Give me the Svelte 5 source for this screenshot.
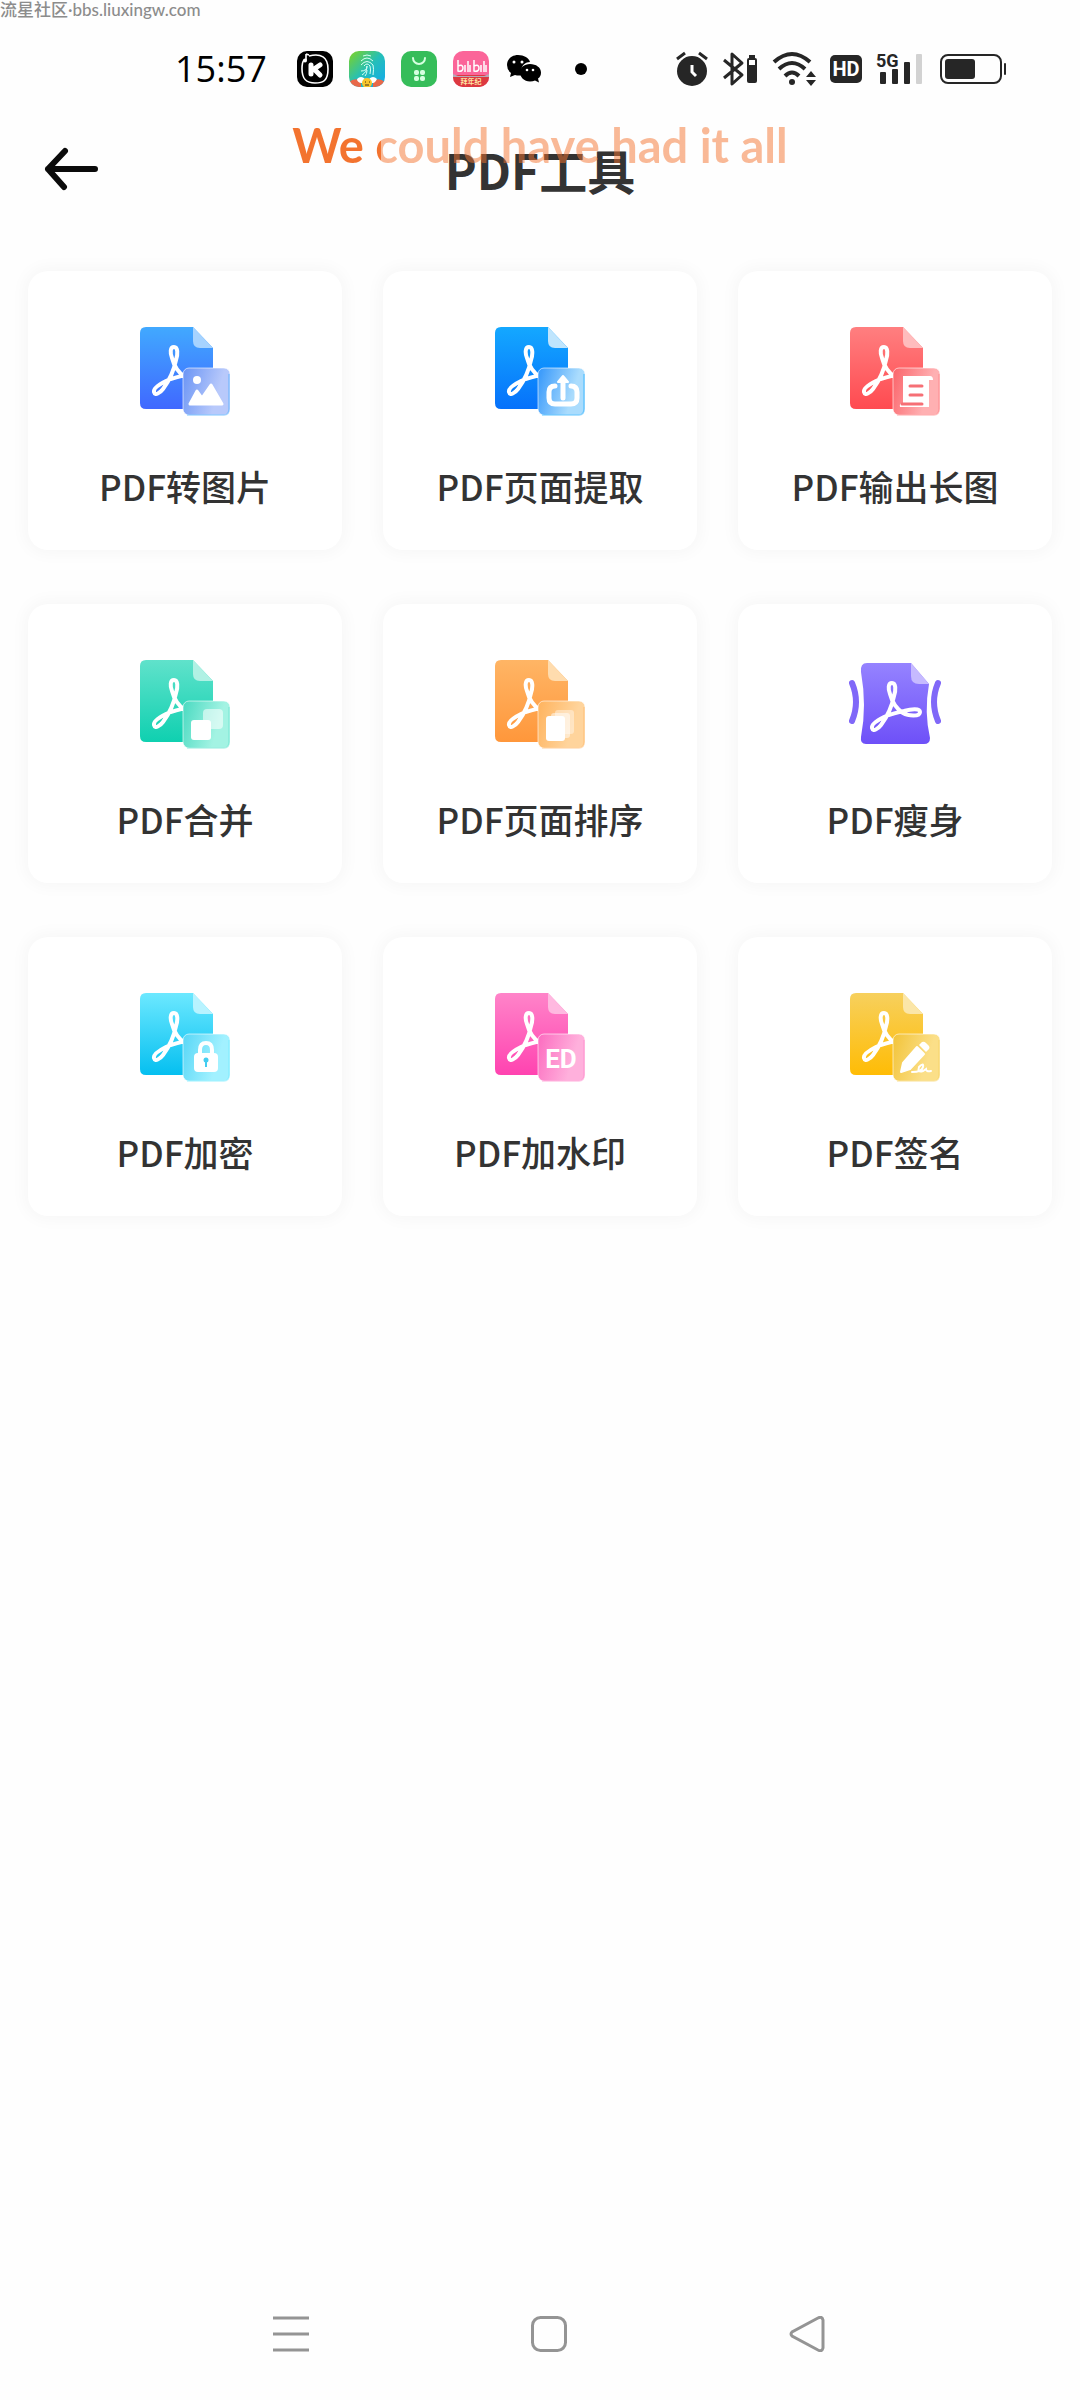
<script>
  const tools = [
    { id: "image", label: "PDF转图片", top: "#41a9ff", bottom: "#4068ff", fold: "#a6d3ff", glassA: "#7199f5", glassB: "#b8c9fb" },
    { id: "extract", label: "PDF页面提取", top: "#14a8ff", bottom: "#0671fb", fold: "#bfe5fd", glassA: "#3f9dfb", glassB: "#aadcfd" },
    { id: "long", label: "PDF输出长图", top: "#ff7f80", bottom: "#ff4a50", fold: "#ffbcbd", glassA: "#fb6a70", glassB: "#ffb0b2" },
    { id: "merge", label: "PDF合并", top: "#60e2cb", bottom: "#0fd0b0", fold: "#b0f1e4", glassA: "#52dcc4", glassB: "#a3f3e3" },
    { id: "sort", label: "PDF页面排序", top: "#ffb565", bottom: "#ff973b", fold: "#ffdcae", glassA: "#ffb663", glassB: "#ffd49c" },
    { id: "slim", label: "PDF瘦身", top: "#9583ff", bottom: "#6e50f8", fold: "#c6baff", glassA: "", glassB: "" },
    { id: "lock", label: "PDF加密", top: "#6ce8ff", bottom: "#05bff0", fold: "#b8f3ff", glassA: "#5fd9f7", glassB: "#a2f1ff" },
    { id: "mark", label: "PDF加水印", top: "#ff84c9", bottom: "#ff43b0", fold: "#ffb9e0", glassA: "#fc72c2", glassB: "#ffb0dc" },
    { id: "sign", label: "PDF签名", top: "#f7d05d", bottom: "#ffbc05", fold: "#fbe6a8", glassA: "#f3c640", glassB: "#fbdf88" }
  ];
</script>

{#snippet acrobat()}
  <path
    d="M34 20C30 20 30 26 32 31C34 39 39 46 45 50C50 53 62 54 62 49C62 45 53 46 46 48C38 50 32 51 26 54C20 57 13 61 14 65C15 69 20 66 23 62C29 54 34 43 36 33C38 27 38 20 34 20Z"
    fill="none"
    stroke="#fff"
    stroke-width="4"
    stroke-linejoin="round"
  />
{/snippet}

<div class="screen">
  <div class="watermark">流星社区·bbs.liuxingw.com</div>

  <header class="status">
    <time>15:57</time>
    <div class="apps">
      <svg width="36" height="36" viewBox="0 0 36 36">
        <rect width="36" height="36" rx="10" />
        <path d="M12 5c12-3 19 1 19 13s-5 14-13 14S5 29 5 18c0-4 0-7 2-9" fill="none" stroke="#fff" stroke-width="1.6" />
        <path d="M9 3v6M9 3l3 1" stroke="#fff" stroke-width="1.6" />
        <circle cx="8" cy="9.500" r="2" fill="#fff" />
        <path d="M14 14v9M17 18l6-4M17 18l6 6" stroke="#fff" stroke-width="5" stroke-linecap="round" />
      </svg>
      <svg width="36" height="36" viewBox="0 0 36 36">
        <defs>
          <linearGradient id="finger" x1="0" y1="0" x2="1" y2="1">
            <stop stop-color="#7fd321" /><stop offset=".5" stop-color="#25bfb9" /><stop offset="1" stop-color="#12a8ee" />
          </linearGradient>
          <clipPath id="app-mask"><rect width="36" height="36" rx="10" /></clipPath>
        </defs>
        <g clip-path="url(#app-mask)">
          <rect width="36" height="36" fill="url(#finger)" />
          <path d="M14 5q4-2 8 0M12 10q6-6 12 0M12 14q6-7 12 0 1 4 0 10M15 15q3-4 6 0 1 4 0 8M12 20q6 0 6-5 0 6-5 9M18 19q0 4-2 6" fill="none" stroke="#d8fff4" />
          <path d="M0 31q6-5 12-1v6H0zM24 30q6-4 12 1v5H24z" fill="#e8694a" />
          <path d="M8 28q4-4 8 0h4q4-4 8 0-2 4-4 4H12q-4-1-4-4z" fill="#fff" />
          <circle cx="18" cy="32" r="5" fill="#f7c52e" />
          <path d="M16 31h1M20 31h1M16 34h4" stroke="#493311" />
        </g>
      </svg>
      <svg width="36" height="36" viewBox="0 0 36 36">
        <rect width="36" height="36" rx="10" fill="#36bd5a" />
        <path d="M12 7a6 6 0 0 0 12 0" fill="none" stroke="#d6ffe0" stroke-width="2" stroke-linecap="round" />
        <g fill="#d6ffe0">
          <rect x="13" y="19" width="5" height="5" rx="2" /><rect x="19" y="19" width="5" height="5" rx="2" />
          <rect x="13" y="25" width="5" height="5" rx="2" /><rect x="19" y="25" width="5" height="5" rx="2" />
        </g>
      </svg>
      <svg width="36" height="36" viewBox="0 0 36 36">
        <g clip-path="url(#app-mask)">
          <rect width="36" height="36" fill="#fb6599" />
          <path d="M0 24h36v12H0z" fill="#dc3940" />
          <path d="M0 23l5 2h26l5-2v3H0z" fill="#b7a7b8" />
          <path d="M5 9v11q5 1 5-3t-5-2M12 14v7M15 10v11M17 14v7M21 9v11q5 1 5-3t-5-2M28 14v7M31 10v11M33 14v7" fill="none" stroke="#fff" stroke-width="1.500" />
          <text class="cjk" x="18" y="33" font-size="7" font-weight="700" text-anchor="middle" fill="#ffe6a3">拜年纪</text>
        </g>
      </svg>
      <svg width="36" height="36" viewBox="0 0 36 36">
        <path d="M13 4C7 4 2 8 2 14q0 5 4 8l-1 4 5-2q4 1 7 0c-3-8 3-13 8-13C24 7 19 4 13 4z" />
        <path d="M25 13c-6 0-10 4-10 8.500s4 9 10 9q3 0 5-1l4 2-1-4q3-2 3-6c0-5-5-8.500-11-8.500z" />
        <g fill="#fff"><circle cx="9" cy="11" r="1.500" /><circle cx="17" cy="11" r="1.500" /><circle cx="22" cy="19" r="1.300" /><circle cx="28" cy="19" r="1.300" /></g>
      </svg>
      <i class="dot"></i>
    </div>

    <div class="system">
      <svg width="32" height="36" viewBox="0 0 32 36">
        <circle cx="16" cy="20" r="15" />
        <path d="M2 8l7-6M30 8l-7-6" stroke="#fff" stroke-width="6" />
        <path d="M1 8l8-6M31 8l-8-6" stroke="#262626" stroke-width="3" />
        <path d="M16 14v7l4 4" fill="none" stroke="#fff" stroke-width="3" />
      </svg>
      <svg width="36" height="36" viewBox="0 0 36 36">
        <path d="M2 9l18 15-10 9V3l10 9L2 27" fill="none" stroke="#262626" stroke-width="3" stroke-linejoin="round" />
        <path d="M27 4h6v3h-6z" />
        <rect x="25" y="7" width="10" height="25" rx="2" />
        <path d="M27 9h6v5h-6z" fill="#fff" />
      </svg>
      <svg width="44" height="36" viewBox="0 0 44 36">
        <path d="M2 11Q20-5 38 11M7 18q13-12 26 0M13 25q7-7 14 0" fill="none" stroke="#262626" stroke-width="4" />
        <circle cx="20" cy="31" r="3" />
        <path d="M34 26l5-6 5 6zM34 29l5 6 5-6z" />
      </svg>
      <svg width="32" height="36" viewBox="0 0 32 36">
        <rect y="4" width="32" height="28" rx="5" />
        <text class="narrow" x="16" y="25" font-size="20" font-weight="700" text-anchor="middle" fill="#fff">HD</text>
      </svg>
      <svg width="48" height="36" viewBox="0 0 48 36">
        <text class="narrow" x="0" y="16" font-size="18" font-weight="700">5G</text>
        <rect x="4" y="21" width="6" height="12" rx="1" /><rect x="16" y="18" width="6" height="15" rx="1" />
        <rect x="28" y="11" width="6" height="22" rx="1" /><rect x="40" y="3" width="6" height="30" rx="1" fill="#d2d2d2" />
      </svg>
      <svg width="68" height="36" viewBox="0 0 68 36">
        <rect x="3" y="4" width="60" height="28" rx="7" fill="none" stroke="#262626" stroke-width="2" />
        <rect x="7" y="8" width="30" height="20" rx="3" />
        <rect x="66" y="12" width="2" height="12" rx="1" />
      </svg>
    </div>
  </header>

  <div class="titlebar">
    <button class="back" aria-label="返回">
      <svg width="56" height="44" viewBox="0 0 56 44">
        <path d="M51 22H4M21 4L4 22l16 18" fill="none" stroke="#0b0b0b" stroke-width="6" stroke-linecap="round" stroke-linejoin="round" />
      </svg>
    </button>
    <h1>PDF工具</h1>
    <div class="lyric">We could have had it all</div>
  </div>

  <main class="grid">
    {#each tools as tool}
      <button class="card">
        <svg width="92" height="92" viewBox="-1 -1 92 92">
          <defs>
            <linearGradient id="page-{tool.id}" x1="0" y1="0" x2="0" y2="1">
              <stop stop-color={tool.top} /><stop offset="1" stop-color={tool.bottom} />
            </linearGradient>
            <linearGradient id="glass-{tool.id}" x1="0" y1="0.3" x2="1" y2="0.6">
              <stop stop-color={tool.glassA} /><stop offset=".75" stop-color={tool.glassB} />
            </linearGradient>
          </defs>
          {#if tool.id === "slim"}
            <path d="M17 3H61L79 24Q74 52 80 78 80 84 74 84H16Q10 84 11 77 17 46 11 12 10 3 17 3z" fill="url(#page-slim)" />
            <path d="M61 3v13q0 8 8 8h10z" fill={tool.fold} />
            <path d="M2 23q8 19 0 38M88 23q-8 19 0 38" fill="none" stroke="#8068f8" stroke-width="6" stroke-linecap="round" />
            <g transform="translate(8 3)">{@render acrobat()}</g>
          {:else}
            <path d="M6 0H53L73 21V82H6Q0 82 0 76V6Q0 0 6 0z" fill="url(#page-{tool.id})" />
            <path d="M53 0v14q0 7 7 7h13z" fill={tool.fold} />
            {@render acrobat()}
            <rect x="43" y="41" width="47" height="47" rx="6" fill="url(#glass-{tool.id})" stroke="#fff" stroke-opacity=".6" />
            <path d="M47 88h37q5 0 5-6V47" fill="none" stroke={tool.top} stroke-opacity=".45" stroke-width="1.500" />
            {#if tool.id === "image"}
              <circle cx="57" cy="53" r="4" fill="#fff" />
              <path d="M50 77l7-13 5 7 9-13 11 19z" fill="#fff" stroke="#fff" stroke-width="3" stroke-linejoin="round" />
            {:else if tool.id === "extract"}
              <path d="M60 59q-6 0-6 6v6q0 6 6 6h16q6 0 6-6v-6q0-6-6-6" fill="none" stroke="#fff" stroke-width="5" stroke-linecap="round" />
              <path d="M68 71V55" stroke="#fff" stroke-width="5" stroke-linecap="round" />
              <path d="M63 55l5-6 5 6z" fill="#fff" stroke="#fff" stroke-width="2" stroke-linejoin="round" />
            {:else if tool.id === "long"}
              <path d="M53 49h27q3 0 3 4h-4v27H50q-1-4 3-4z" fill="#fff" />
              <path d="M60 59h12M60 68h12M52 77h20" stroke="#f66f75" stroke-width="3" stroke-linecap="round" />
            {:else if tool.id === "merge"}
              <rect x="63" y="49" width="20" height="20" rx="4" fill="#fff" fill-opacity=".55" />
              <rect x="51" y="60" width="20" height="20" rx="3" fill="#fff" />
            {:else if tool.id === "sort"}
              <rect x="60" y="50" width="19" height="24" rx="3" fill="#fff" fill-opacity=".4" />
              <rect x="56" y="53" width="19" height="25" rx="3" fill="#fff" fill-opacity=".5" />
              <rect x="51" y="56" width="19" height="25" rx="3" fill="#fff" />
            {:else if tool.id === "lock"}
              <path d="M60 62v-5q0-7 6-7t6 7v5" fill="none" stroke="#fff" stroke-width="4" />
              <rect x="54" y="60" width="24" height="19" rx="4" fill="#fff" />
              <circle cx="66" cy="67" r="2.500" fill="#43cdf0" />
              <path d="M66 67v7" stroke="#43cdf0" stroke-width="2" />
            {:else if tool.id === "mark"}
              <text class="narrow" x="66" y="75" font-size="26" font-weight="700" text-anchor="middle" fill="#fff">ED</text>
            {:else}
              <path d="M67 54l7 7-14 15-9 3 2-9z" fill="#fff" stroke="#fff" stroke-width="2" stroke-linejoin="round" />
              <path d="M69 52l3-3q2-1 4 1l3 3q1 2 0 3l-3 3z" fill="#fff" />
              <path d="M62 79q10 0 11-5t-4 0q-2 6 4 4l3-2q0 3 5 2" fill="none" stroke="#fff" stroke-width="2" stroke-linecap="round" />
            {/if}
          {/if}
        </svg>
        <span>{tool.label}</span>
      </button>
    {/each}
  </main>

  <nav>
    <button aria-label="最近任务">
      <svg width="36" height="36" viewBox="0 0 36 36"><path d="M0 2h36M0 18h36M0 34h36" /></svg>
    </button>
    <button aria-label="主屏幕">
      <svg width="36" height="36" viewBox="0 0 36 36"><rect x="1.500" y="1.500" width="33" height="33" rx="8" /></svg>
    </button>
    <button aria-label="返回上一级">
      <svg width="36" height="36" viewBox="0 0 36 36"><path d="M29 2L3 16q-2 2 0 4l26 14q4 2 5-2V4q-1-4-5-2z" /></svg>
    </button>
  </nav>
</div>

<style>
  :global(body) {
    margin: 0;
    background: #fefefe;
  }

  .screen {
    min-height: 100vh;
    display: flex;
    flex-direction: column;
    position: relative;
    color: #333;
    font-family: "Noto Sans CJK SC", sans-serif;
  }

  button {
    border: 0;
    padding: 0;
    background: none;
    color: inherit;
    font: inherit;
    cursor: pointer;
  }

  svg {
    display: block;
    flex: none;
  }

  .cjk {
    font-family: "Noto Sans CJK SC", sans-serif;
  }

  .narrow {
    font-family: "Roboto", sans-serif;
  }

  .watermark {
    position: absolute;
    top: 0;
    left: 0;
    font: 500 17px/20px "Lato", "Noto Sans CJK SC", sans-serif;
    color: #8c8c8c;
  }

  .status {
    display: flex;
    align-items: center;
    height: 36px;
    padding: 51px 74px 0 175px;
    color: #000;
  }

  time {
    font: 500 36px/36px "Open Sans", sans-serif;
    width: 122px;
  }

  .apps,
  .system {
    display: flex;
    align-items: center;
    gap: 16px;
  }

  .system {
    gap: 14px;
    margin-left: auto;
    fill: #262626;
  }

  .dot {
    width: 12px;
    height: 12px;
    margin-left: 18px;
    border-radius: 50%;
    background: #000;
  }

  .titlebar {
    position: relative;
    display: flex;
    align-items: center;
    justify-content: center;
    height: 84px;
    margin-top: 40px;
  }

  .back {
    position: absolute;
    left: 44px;
  }

  h1 {
    margin: 0;
    font-size: 48px;
    line-height: 64px;
    font-weight: 700;
  }

  .lyric {
    position: absolute;
    top: -12px;
    font: 700 47px/60px "Lato", sans-serif;
    white-space: nowrap;
    background: linear-gradient(90deg, #f3732f 18%, rgba(243, 115, 47, 0.5) 18%);
    background-clip: text;
    color: transparent;
  }

  .grid {
    display: grid;
    grid-template-columns: repeat(3, 1fr);
    gap: 54px 41px;
    padding: 60px 28px;
  }

  .card {
    display: flex;
    flex-direction: column;
    align-items: center;
    gap: 42px;
    padding: 55px 0 38px;
    border-radius: 20px;
    background: #fff;
    box-shadow: 0 0 16px 4px rgba(0, 0, 0, 0.03);
  }

  .card span {
    font-size: 35px;
    line-height: 52px;
    font-weight: 500;
  }

  nav {
    display: flex;
    justify-content: center;
    gap: 222px;
    margin-top: auto;
    padding: 0 0 48px 18px;
  }

  nav svg {
    fill: none;
    stroke: #949494;
    stroke-width: 3;
  }
</style>
